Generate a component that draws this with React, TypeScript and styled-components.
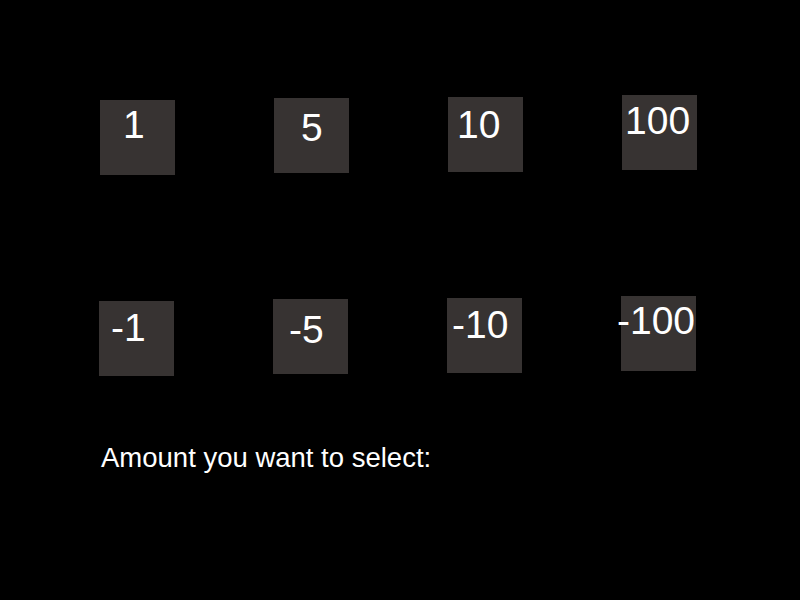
import React from "react";
import styled, { createGlobalStyle } from "styled-components";

const GlobalStyle = createGlobalStyle`
  html, body {
    margin: 0;
    padding: 0;
    background: #000;
  }
  body {
    font-family: "Liberation Sans", Arial, sans-serif;
    color: #fff;
  }
`;

const Board = styled.div`
  display: flex;
  flex-direction: column;
  padding: 95px 0 0 100px;
  width: 800px;
  height: 600px;
  box-sizing: border-box;
  background: #000;
`;

const Row = styled.div<{ $shift?: number; $gap?: number }>`
  display: flex;
  align-items: flex-start;
  gap: 99px;
  margin-left: ${(p) => p.$shift || 0}px;
  margin-top: ${(p) => p.$gap || 0}px;
`;

const Tile = styled.div<{ $top: number }>`
  display: flex;
  align-items: flex-start;
  justify-content: flex-start;
  width: 75px;
  height: 75px;
  margin-top: ${(p) => p.$top}px;
  background: #373332;
  cursor: pointer;
`;

const Label = styled.span<{ $x: number; $y: number }>`
  display: block;
  margin: ${(p) => p.$y}px 0 0 ${(p) => p.$x}px;
  color: #fff;
  font-size: 39px;
  line-height: 46px;
  white-space: nowrap;
`;

const Prompt = styled.div`
  margin: 66px 0 0 1px;
  font-size: 27.5px;
  line-height: 32px;
  color: #fff;
`;

type Step = { label: string; top: number; x: number; y: number };

const plus: Step[] = [
  { label: "1", top: 5, x: 23, y: 2 },
  { label: "5", top: 3, x: 27, y: 7 },
  { label: "10", top: 2, x: 9, y: 5 },
  { label: "100", top: 0, x: 3, y: 3 },
];

const minus: Step[] = [
  { label: "-1", top: 5, x: 12, y: 4 },
  { label: "-5", top: 3, x: 16, y: 8 },
  { label: "-10", top: 2, x: 5, y: 4 },
  { label: "-100", top: 0, x: -4, y: 2 },
];

const StepRow = ({ steps, shift, gap }: { steps: Step[]; shift?: number; gap?: number }) => (
  <Row $shift={shift} $gap={gap}>
    {steps.map((s) => (
      <Tile key={s.label} $top={s.top}>
        <Label $x={s.x} $y={s.y}>{s.label}</Label>
      </Tile>
    ))}
  </Row>
);

const App = () => {
  return (
    <>
      <GlobalStyle />
      <Board>
        <StepRow steps={plus} />
        <StepRow steps={minus} shift={-1} gap={121} />
        <Prompt>Amount you want to select:</Prompt>
      </Board>
    </>
  );
};

export default App;
